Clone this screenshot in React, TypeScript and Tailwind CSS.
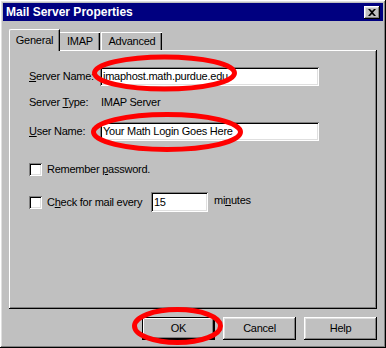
import React from "react";

const raised =
  "shadow-[inset_-1px_-1px_#000,inset_1px_1px_#fff,inset_-2px_-2px_#808080,inset_2px_2px_#dfdfdf]";
const sunken =
  "shadow-[inset_1px_1px_#808080,inset_-1px_-1px_#fff,inset_2px_2px_#000,inset_-2px_-2px_#dfdfdf]";

function U({ children }: { children: React.ReactNode }) {
  return <span className="underline underline-offset-[1px]">{children}</span>;
}

function Checkbox() {
  return <div className={`w-[13px] h-[13px] bg-white shrink-0 ${sunken}`} />;
}

function Button({ label, isDefault }: { label: string; isDefault?: boolean }) {
  return (
    <div
      className={`w-[73px] h-[23px] flex items-center justify-center ${
        isDefault
          ? "shadow-[inset_0_0_0_1px_#000,inset_-2px_-2px_#000,inset_2px_2px_#fff,inset_-3px_-3px_#808080]"
          : raised
      }`}
    >
      {label}
    </div>
  );
}

export default function App() {
  return (
    <div
      className={`relative w-[386px] h-[348px] bg-[#c0c0c0] p-[3px] text-[11px] tracking-[-0.25px] text-black ${raised}`}
      style={{ fontFamily: '"Liberation Sans", Arial, sans-serif' }}
    >
      {/* title bar */}
      <div className="h-[18px] bg-[#000080] flex items-center justify-between pl-[3px] pr-[3px]">
        <span className="text-white font-bold text-[12px] tracking-normal leading-none">Mail Server Properties</span>
        <div className={`w-[16px] h-[13px] bg-[#c0c0c0] flex items-center justify-center ${raised}`}>
          <svg width="8" height="7" viewBox="0 0 8 7">
            <path d="M0 0h2l2 2 2-2h2L5 3.5 8 7H6L4 5 2 7H0l3-3.5z" fill="#000" />
          </svg>
        </div>
      </div>

      {/* tabs */}
      <div className="flex items-end ml-[6px] mt-[7px] h-[22px]">
        <div className="relative z-10 h-[22px] w-[51px] px-[6px] flex items-center justify-center bg-[#c0c0c0] border-t border-l border-white border-r-[1px] border-r-[#000] shadow-[inset_-1px_0_#808080] rounded-tl-[2px] -mb-[1px]">
          General
        </div>
        <div className="h-[18px] w-[40px] flex items-center justify-center border-t border-white shadow-[inset_-1px_0_#000,inset_-2px_0_#808080]">
          IMAP
        </div>
        <div className="h-[18px] w-[61px] flex items-center justify-center border-t border-l border-white shadow-[inset_-1px_0_#000,inset_-2px_0_#808080] ml-[1px]">
          Advanced
        </div>
      </div>

      {/* panel */}
      <div className="ml-[6px] w-[368px] h-[259px] pl-[20px] pt-[17px] shadow-[inset_-1px_-1px_#000,inset_1px_1px_#fff,inset_-2px_-2px_#808080]">
        <div className="flex items-center h-[19px]">
          <div className="w-[71px]">
            <U>S</U>erver Name:
          </div>
          <div className={`w-[219px] h-[19px] bg-white flex items-center pl-[3px] ${sunken}`}>
            imaphost.math.purdue.edu
          </div>
        </div>
        <div className="flex items-center h-[19px] mt-[7px]">
          <div className="w-[72px]">
            Server <U>T</U>ype:
          </div>
          <div>IMAP Server</div>
        </div>
        <div className="flex items-center h-[19px] mt-[10px]">
          <div className="w-[71px]">
            <U>U</U>ser Name:
          </div>
          <div className={`w-[219px] h-[19px] bg-white flex items-center pl-[3px] ${sunken}`}>
            Your Math Login Goes Here
          </div>
        </div>
        <div className="flex items-center h-[13px] mt-[22px] gap-[5px]">
          <Checkbox />
          <span>
            Remember <U>p</U>assword.
          </span>
        </div>
        <div className="flex items-center h-[20px] mt-[16px]">
          <Checkbox />
          <span className="ml-[5px] w-[104px]">
            C<U>h</U>eck for mail every
          </span>
          <div className={`w-[57px] h-[20px] bg-white flex items-center pl-[3px] ${sunken}`}>15</div>
          <span className="ml-[6px] -mt-[4px]">
            mi<U>n</U>utes
          </span>
        </div>
      </div>

      {/* buttons */}
      <div className="flex justify-end gap-[8px] mt-[8px] pr-[6px]">
        <Button label="OK" isDefault />
        <Button label="Cancel" />
        <Button label="Help" />
      </div>

      {/* red annotation ellipses */}
      <svg className="absolute left-0 top-0 pointer-events-none" width="386" height="348">
        <ellipse cx="164.5" cy="73" rx="70" ry="16" fill="none" stroke="#f00" strokeWidth="5" />
        <ellipse cx="167" cy="132" rx="73.5" ry="17.5" fill="none" stroke="#f00" strokeWidth="5" />
        <ellipse cx="177.5" cy="326" rx="43" ry="16.5" fill="none" stroke="#f00" strokeWidth="5" />
      </svg>
    </div>
  );
}
